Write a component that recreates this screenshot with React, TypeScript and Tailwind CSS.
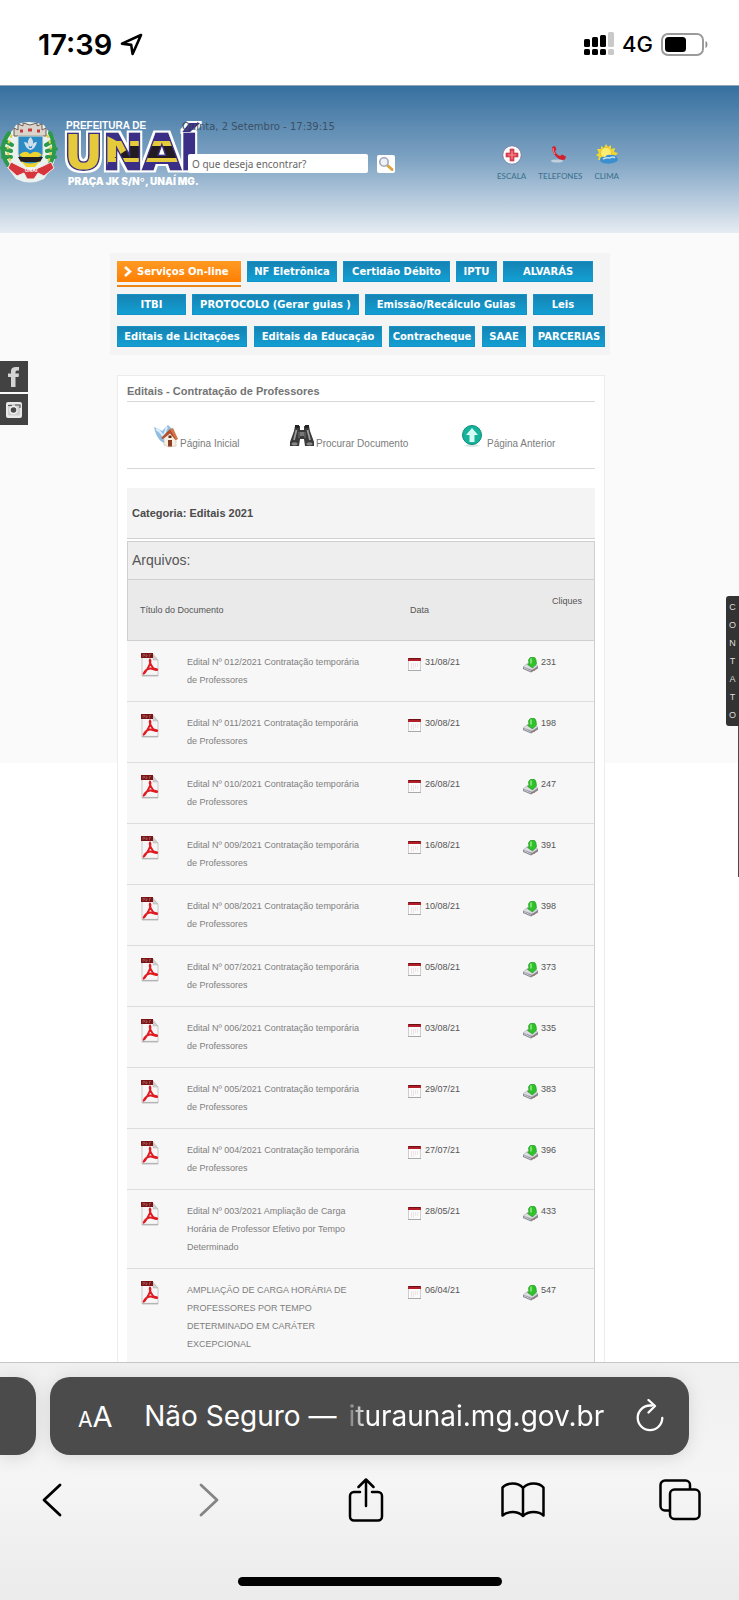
import React from "react";

type Doc = { title: string; date: string; clicks: number };

const professores = (n: string) => `Edital Nº ${n}/2021 Contratação temporária de Professores`;

const docs: Doc[] = [
  { title: professores("012"), date: "31/08/21", clicks: 231 },
  { title: professores("011"), date: "30/08/21", clicks: 198 },
  { title: professores("010"), date: "26/08/21", clicks: 247 },
  { title: professores("009"), date: "16/08/21", clicks: 391 },
  { title: professores("008"), date: "10/08/21", clicks: 398 },
  { title: professores("007"), date: "05/08/21", clicks: 373 },
  { title: professores("006"), date: "03/08/21", clicks: 335 },
  { title: professores("005"), date: "29/07/21", clicks: 383 },
  { title: professores("004"), date: "27/07/21", clicks: 396 },
  { title: "Edital Nº 003/2021 Ampliação de Carga Horária de Professor Efetivo por Tempo Determinado", date: "28/05/21", clicks: 433 },
  { title: "AMPLIAÇÃO DE CARGA HORÁRIA DE PROFESSORES POR TEMPO DETERMINADO EM CARÁTER EXCEPCIONAL", date: "06/04/21", clicks: 547 },
];

function StatusBar() {
  return (
    <div className="flex h-[85px] shrink-0 items-center justify-between bg-white pr-[30px] pl-[38px] pt-[3px] font-['Inter',sans-serif] text-black">
      <div className="flex items-center gap-2">
        <span className="text-[29px] leading-none font-semibold">17:39</span>
        <svg width="23" height="23" viewBox="0 0 23 23" fill="none" stroke="#000" strokeWidth="2.6" strokeLinejoin="round">
          <path d="M21 2 2 10.6l9.2 1.3L12.6 21z" />
        </svg>
      </div>
      <div className="flex items-center gap-2">
        <svg width="30" height="24" viewBox="0 0 30 24">
          <g fill="#000">
            <rect x="0" y="7" width="6" height="8" rx="1.5" />
            <rect x="8" y="5" width="6" height="10" rx="1.5" />
            <rect x="16" y="3" width="6" height="12" rx="1.5" />
            <rect x="0" y="17" width="6" height="6" rx="1.5" />
            <rect x="8" y="17" width="6" height="6" rx="1.5" />
            <rect x="16" y="17" width="6" height="6" rx="1.5" />
          </g>
          <g fill="#c9c9c9">
            <rect x="24" y="0" width="6" height="15" rx="1.5" />
            <rect x="24" y="17" width="6" height="6" rx="1.5" />
          </g>
        </svg>
        <span className="text-[22px] leading-none font-medium">4G</span>
        <svg width="48" height="23" viewBox="0 0 48 23">
          <rect x="1" y="1" width="41" height="21" rx="6" fill="none" stroke="#9b9b9b" strokeWidth="2" />
          <rect x="4" y="4" width="21" height="15" rx="3.5" fill="#000" />
          <path d="M44.5 8c2.6.6 2.6 6.4 0 7z" fill="#8d8d8d" />
        </svg>
      </div>
    </div>
  );
}

function CityLogo() {
  return (
    <svg width="204" height="72" viewBox="0 0 204 72" role="img" aria-label="Prefeitura de Unaí" className="shrink-0">
      <defs>
        <filter id="outline" filterUnits="userSpaceOnUse" x="58" y="0" width="146" height="72">
          <feMorphology in="SourceAlpha" operator="dilate" radius="2" result="wide" />
          <feFlood floodColor="#fff" />
          <feComposite in2="wide" operator="in" />
          <feMerge>
            <feMergeNode />
            <feMergeNode in="SourceGraphic" />
          </feMerge>
        </filter>
        <pattern id="flag" patternUnits="userSpaceOnUse" width="204" height="72">
          <rect width="204" height="72" fill="#3b2f86" />
          <rect x="104" y="22" width="76" height="21" fill="#e5cb3a" />
          <rect x="104" y="27" width="76" height="12" fill="#211f22" />
          <path d="M60 10H105V16L113 20 120 24 128 30 119 36 108 43 105 54H60z" fill="#e5cb3a" />
          <rect x="181" y="0" width="23" height="72" fill="#3b2f86" />
        </pattern>
      </defs>
      {/* coat of arms */}
      <g>
        <path d="M12 12 16 6q12-6 28 0l4 6 6 6q5 16-2 30l-8 12q-14 7-28 0L7 48Q-2 30 6 18z" fill="#eaf2ee" />
        <path d="M9 14Q-3 30 8 46M5 22l7 4M2 29l9 3M3 38l8 0M50 14q9 18-1 32M53 22l-7 4M56 30l-9 2M55 38l-8 0" fill="none" stroke="#2c9a4c" strokeWidth="4" strokeLinecap="round" />
        <path d="M12 16q-8 14-1 27M47 16q7 14 1 27" fill="none" stroke="#e3cf37" strokeWidth="2" strokeDasharray="3 3" />
        <path d="M14 17V9l4 2V5l5 2V4l7 2 7-2v3l5-2v6l4-2v8z" fill="#d9d4cc" stroke="#6d5d57" strokeWidth="1" />
        <path d="M20 12h3M28 11h4M37 12h3" stroke="#c43a3a" strokeWidth="3" />
        <path d="M18 17H43V35q0 9-12.500 12Q18 44 18 35z" fill="#2c8bc4" stroke="#e7e1cf" strokeWidth="1" />
        <path d="M30.500 18c4 4 3 8 0 10-3-2-4-6 0-10zM24 23c4 0 5 3 5 6h3c0-3 1-6 5-6-1 4-3 7-6.500 8C27 30 25 27 24 23z" fill="#cfe0ec" />
        <path d="M19 36q6-6 11-1 6-5 12 1l-5 3H24z" fill="#f0d22f" />
        <path d="M18 38h25l-3 5H21z" fill="#231f20" />
        <path d="M21 42q9 5 19 0l-5 6h-9z" fill="#f0d22f" />
        <path d="M11 43 19 47Q30 54 43 47L51 43 54 49 44 57 38 54 34 60H27L24 54 17 57 8 49z" fill="#d5353b" stroke="#f4e7e7" strokeWidth="1" />
        <text x="31" y="53" textAnchor="middle" fontSize="5" fontWeight="700" fill="#fff" fontFamily="Inter, sans-serif">UNAÍ</text>
      </g>
      <text x="66" y="10" fontSize="10" fontWeight="700" fill="#fff" fontFamily="'Liberation Sans', sans-serif">PREFEITURA DE</text>
      <text
        x="64"
        y="50"
        fontFamily="'DejaVu Sans', sans-serif"
        fontSize="48"
        fontWeight="700"
        fill="url(#flag)"
        stroke="#3b2f86"
        strokeWidth="3"
        paintOrder="stroke"
        filter="url(#outline)"
      >
        UNAÍ
      </text>
      <text x="68" y="66" fontSize="10" fontWeight="900" fill="#fff" fontFamily="Inter, sans-serif">PRAÇA JK S/Nº, UNAÍ MG.</text>
    </svg>
  );
}

function Shortcut({ label, children }: { label: string; children: React.ReactNode }) {
  return (
    <a href="#" className="flex flex-col items-center gap-1 font-['Lato',sans-serif] text-[8px] leading-3 font-medium text-[#41738f]">
      <svg width="22" height="22" viewBox="0 0 22 22">{children}</svg>
      {label}
    </a>
  );
}

function Header() {
  return (
    <header className="flex h-[148px] items-start border-t border-[#8fa5b6] bg-linear-to-b from-[#35709f] via-[#7ea3c3] to-[#e6ecf2] pt-[33px]">
      <CityLogo />
      <div className="relative -ml-[22px] w-[216px] pt-[2px]">
        <p className="font-['DejaVu_Sans',sans-serif] text-[10px] leading-3 text-[#3d5064]">Quinta, 2 Setembro - 17:39:15</p>
        <form className="mt-[21px] ml-[6px] flex items-center gap-[9px]" onSubmit={(e) => e.preventDefault()}>
          <input
            type="search"
            aria-label="Pesquisar"
            placeholder="O que deseja encontrar?"
            className="h-[19px] w-[180px] rounded-[2px] bg-white px-1 font-['Noto_Sans',sans-serif] text-[10px] text-[#555] placeholder:text-[#666] placeholder:opacity-100"
          />
          <button type="submit" aria-label="Buscar" className="flex size-[18px] items-center justify-center rounded-[2px] bg-white">
            <svg width="16" height="16" viewBox="0 0 16 16" fill="none">
              <path d="m9 9 5 4.500" stroke="#dca23c" strokeWidth="3" strokeLinecap="round" />
              <circle cx="6" cy="6" r="4.200" fill="#eef2f8" stroke="#a3a7b8" strokeWidth="1.600" />
            </svg>
          </button>
        </form>
      </div>
      <nav aria-label="Atalhos" className="ml-[99px] flex gap-3 pt-[25px]">
        <Shortcut label="ESCALA">
          <circle cx="11" cy="11" r="9.300" fill="#fbfbfd" stroke="#7c7fa4" strokeWidth="1" />
          <path d="M9 5h4v4h4v4h-4v4H9v-4H5V9h4z" fill="#e3404f" stroke="#b73d4d" strokeWidth=".6" />
          <path d="M11 7v8M7 11h8" stroke="#f3949a" strokeWidth="1" />
        </Shortcut>
        <Shortcut label="TELEFONES">
          <ellipse cx="8" cy="17" rx="6" ry="1.600" fill="#c3d0db" />
          <path d="M3 3 6 2l1.500 3.500L6 7q1.500 4 5 5l2-1.500 4 2-1 3q-5 1.500-9-3Q3 8.500 3 3z" fill="#d3202e" />
          <path d="M4 4q0 4 2 6" stroke="#f38d90" strokeWidth="1" fill="none" />
        </Shortcut>
        <Shortcut label="CLIMA">
          <path d="m10 0 2 3 3-2v4l4-1-1 4 4 1-3 3 2 4H2l1-3-3-2 3-2-2-4 4 0V2l3 2z" fill="#f4d72c" />
          <circle cx="10" cy="9" r="5.500" fill="#fbec74" stroke="#e5bb20" strokeWidth=".7" />
          <path d="M4 16q0-4 5-3 2-3 6-2 2-1 5 1 4 4 0 6-6 3-13 1-3-1-3-3z" fill="#3b8fd0" />
          <path d="M7 15q4-2 7-1 3-2 5 0" stroke="#bfe2f5" strokeWidth="1.500" fill="none" />
        </Shortcut>
      </nav>
    </header>
  );
}

function Tile({ label, className }: { label: string; className: string }) {
  return (
    <a
      href="#"
      className={`flex h-[21px] items-center justify-center border border-[#1494c6] bg-linear-to-b from-[#1583b3] to-[#129fd3] text-[10px] leading-none font-bold whitespace-nowrap text-white ${className}`}
    >
      {label}
    </a>
  );
}

function ServiceNav() {
  return (
    <nav aria-label="Serviços" className="flex h-[102px] flex-col bg-[#f4f4f4] pt-2 pl-[7px] font-['DejaVu_Sans',Verdana,sans-serif]">
      <div className="flex h-[33px] gap-[6px]">
        <a href="#" className="flex h-[26px] w-[124px] flex-col border-b-2 border-[#ee8613]">
          <span className="flex h-[21px] items-center gap-1 bg-linear-to-b from-[#ff9a22] to-[#ff7f00] pl-[6px] text-[10px] leading-none font-bold whitespace-nowrap text-white">
            <svg width="10" height="11" viewBox="0 0 10 11" fill="none" stroke="#fff" strokeWidth="2.600">
              <path d="m2 1 5 4.500L2 10" />
            </svg>
            Serviços On-line
          </span>
        </a>
        <Tile label="NF Eletrônica" className="w-[90px]" />
        <Tile label="Certidão Débito" className="w-[107px]" />
        <Tile label="IPTU" className="w-[41px]" />
        <Tile label="ALVARÁS" className="w-[90px]" />
      </div>
      <div className="flex h-8 gap-[6px]">
        <Tile label="ITBI" className="w-[69px]" />
        <Tile label="PROTOCOLO (Gerar guias )" className="w-[167px]" />
        <Tile label="Emissão/Recálculo Guias" className="w-[162px]" />
        <Tile label="Leis" className="w-[60px]" />
      </div>
      <div className="flex gap-[7px]">
        <Tile label="Editais de Licitações" className="w-[130px]" />
        <Tile label="Editais da Educação" className="w-[128px]" />
        <Tile label="Contracheque" className="w-[86px]" />
        <Tile label="SAAE" className="w-[44px]" />
        <Tile label="PARCERIAS" className="w-[72px]" />
      </div>
    </nav>
  );
}

function PdfIcon() {
  return (
    <svg width="18" height="24" viewBox="0 0 18 24" className="block">
      <path d="M1 3h12l4 4v16H1z" fill="#f6f6f6" stroke="#c9c9c9" strokeWidth="1" />
      <path d="M12 1v6h5z" fill="#cfcfcf" stroke="#b5b5b5" strokeWidth=".5" />
      <path d="M1 22.500h16" stroke="#b4b4b4" strokeWidth="1.200" />
      <rect x="0" y="0" width="12" height="5" fill="#7c1416" />
      <path d="M2 4V1.500h1.500V3M5 4V1.500l1.500 1.200L5 4M8.500 4V1.500H10" stroke="#b98080" strokeWidth=".5" fill="none" />
      <path d="M9 6.500c-1.500 2 1.500 6 3 8.500 1.500 1.500 5 .5 4 2-1.500 1-4.500-1.800-7-1.500S3.500 18 3 20c-1 1 0 1 1-.5C6.500 16 9.500 11 9.500 8z" fill="none" stroke="#e01b22" strokeWidth="1.900" strokeLinejoin="round" />
    </svg>
  );
}

function CalendarIcon() {
  return (
    <svg width="13" height="15" viewBox="0 0 13 15" className="shrink-0">
      <rect x=".5" y="1.500" width="12" height="12" fill="#fbfafa" stroke="#cfcfcf" />
      <rect x="0" y="1" width="13" height="3" fill="#b31f28" />
      <path d="M1 1.500h11" stroke="#6a1016" strokeWidth="1" />
      <path d="M3 7h7M3 9h7M3 11h4" stroke="#e0cfcf" strokeWidth="1" strokeDasharray="1 1" />
      <path d="M0 13.500h13" stroke="#a9a9a9" strokeWidth="1" />
    </svg>
  );
}

function DownloadIcon() {
  return (
    <svg width="16" height="16" viewBox="0 0 16 16" className="shrink-0">
      <path d="M0 10 5 6l10 3-5 4z" fill="#dcdce2" stroke="#a9a9b5" strokeWidth=".6" />
      <path d="M0 10v2l8 3.500 7-4V9l-6 4z" fill="#85858f" />
      <path d="m1 11 7 3" stroke="#c8c8d2" strokeWidth="1" />
      <path d="M5.500 3q1-3 4-3 3 0 3.500 3l.5 4-4 4-5-3.500 1.500-1z" fill="#2fc22b" stroke="#1e8e20" strokeWidth=".6" />
      <path d="M8 1.500v5" stroke="#8cea7c" strokeWidth="1.600" />
      <circle cx="11" cy="13.300" r=".8" fill="#d0633a" />
    </svg>
  );
}

function HouseIcon() {
  return (
    <svg width="24" height="24" viewBox="0 0 24 24" className="shrink-0">
      <path d="M0 3q5 2 8 4l6-6 4 4-5 15Q3 18 0 3z" fill="#8fbde4" />
      <path d="M2 5q6 3 8 10M13 3l-3 8" stroke="#dceefa" strokeWidth="2" fill="none" />
      <path d="M10 14 16 9l6 5v8l-7 1-5-2z" fill="#f5efe4" stroke="#c9bba8" strokeWidth=".6" />
      <path d="m7 14 9-9 7 10-1.500 1L16 9.500 9 15z" fill="#b4502b" />
      <path d="m16 5 3-1 5 11-2 1z" fill="#d27748" />
      <path d="M14 16h4v6.500h-4z" fill="#8c3f25" />
      <path d="M14.500 11.500h3v2.500h-3z" fill="#6d2a1b" />
    </svg>
  );
}

function BinocularsIcon() {
  return (
    <svg width="24" height="24" viewBox="0 0 24 24" className="shrink-0">
      <path d="M5 2h5v4h4V2h5l1 5 4 11v4h-9l-1-7h-4l-1 7H0v-4L4 7z" fill="#3a3a3a" />
      <path d="M5 1h4v3H5zM15 1h4v3h-4z" fill="#222" />
      <path d="M6.500 6 4 16M17.500 6 20 16" stroke="#9c9c9c" strokeWidth="1.800" />
      <path d="M9 8v6M15 8v6" stroke="#6e6e6e" strokeWidth="1.200" />
      <path d="M10 8h4v4h-4z" fill="#777" />
      <ellipse cx="4.500" cy="19.800" rx="3" ry="1.600" fill="#878787" />
      <ellipse cx="19.500" cy="19.800" rx="3" ry="1.600" fill="#878787" />
    </svg>
  );
}

function UpIcon() {
  return (
    <svg width="22" height="24" viewBox="0 0 22 24" className="shrink-0">
      <ellipse cx="11" cy="21.500" rx="7" ry="1.500" fill="#d9e5e3" />
      <circle cx="11" cy="11" r="9.500" fill="#16b39c" stroke="#0b8a79" strokeWidth="1" />
      <path d="m11 4 6 7h-3.500v7h-5v-7H5z" fill="#d4fbf4" />
    </svg>
  );
}

function Documents() {
  const link = "flex items-start text-[10px] text-[#7c7c7c]";
  return (
    <section className="mt-[20px] mr-[5px] ml-[7px] border border-[#ececec] bg-white px-[9px] pb-6 font-['Liberation_Sans',Arial,sans-serif]">
      <h1 className="border-b border-[#d8d8d8] pt-2 pb-[2px] text-[11px] leading-[15px] font-bold text-[#747474]">
        Editais - Contratação de Professores
      </h1>
      <div className="flex h-[67px] border-b border-[#d8d8d8] pt-[22px]">
        <a href="#" className={`${link} w-[136px] gap-[2px] pl-[27px]`}>
          <HouseIcon />
          <span className="pt-3">Página Inicial</span>
        </a>
        <a href="#" className={`${link} w-[170px] gap-[2px] pl-[27px]`}>
          <BinocularsIcon />
          <span className="pt-3">Procurar Documento</span>
        </a>
        <a href="#" className={`${link} gap-[4px] pl-[28px]`}>
          <UpIcon />
          <span className="pt-3">Página Anterior</span>
        </a>
      </div>
      <h2 className="mt-[19px] mb-[2px] flex h-[51px] items-center border-b border-[#cfcfcf] bg-[#f4f4f4] px-[5px] text-[11px] font-bold text-[#4b4b4b]">
        Categoria: Editais 2021
      </h2>
      <table className="w-full table-fixed border-separate border-spacing-0 border-r border-[#cfcfcf] text-[9px] leading-[18px] text-[#555]">
        <colgroup>
          <col className="w-[60px]" />
          <col className="w-[221px]" />
          <col className="w-[115px]" />
          <col />
        </colgroup>
        <thead>
          <tr>
            <th colSpan={4} className="h-[39px] border-y border-l border-[#cfcfcf] bg-[#eee] px-1 pb-[2px] text-left text-[14px] font-normal">
              Arquivos:
            </th>
          </tr>
          <tr className="bg-[#eaeaea]">
            <th colSpan={2} className="h-[61px] border-b border-l border-[#cfcfcf] pl-3 text-left font-normal">
              Título do Documento
            </th>
            <th className="border-b border-[#cfcfcf] pl-[2px] text-left font-normal">Data</th>
            <th className="border-b border-[#cfcfcf] pt-3 pr-3 text-right align-top font-normal">Cliques</th>
          </tr>
        </thead>
        <tbody>
          {docs.map((d) => (
            <tr key={d.date} className="bg-[#f7f7f7] align-top">
              <td className="border-b border-[#dcdcdc] pt-3 pl-[14px]">
                <PdfIcon />
              </td>
              <td className="border-b border-[#dcdcdc] py-3 pr-[38px]">
                <a href="#" className="block text-[#7e7e7e]">{d.title}</a>
              </td>
              <td className="border-b border-[#dcdcdc] pt-3">
                <span className="flex items-start gap-1">
                  <span className="pt-1"><CalendarIcon /></span>
                  {d.date}
                </span>
              </td>
              <td className="border-b border-[#dcdcdc] pt-3">
                <span className="flex items-start gap-[2px]">
                  <span className="pt-1"><DownloadIcon /></span>
                  {d.clicks}
                </span>
              </td>
            </tr>
          ))}
        </tbody>
      </table>
    </section>
  );
}

function SideWidgets() {
  return (
    <>
      <div className="absolute top-[276px] left-0 flex flex-col gap-[2px]">
        <a href="#" aria-label="Facebook" className="flex h-[31px] w-7 items-center justify-center bg-[#424242]">
          <svg width="12" height="20" viewBox="0 0 12 20" fill="#d4d4d4">
            <path d="M3 20V10H0V6.500h3V4q0-4 5-4h3v3.500H9Q7.500 3.500 7.500 5v1.500H11L10.500 10h-3v10z" />
          </svg>
        </a>
        <a href="#" aria-label="Instagram" className="flex h-[31px] w-7 items-center justify-center bg-[#424242]">
          <svg width="16" height="16" viewBox="0 0 16 16">
            <rect width="16" height="16" rx="2" fill="#e9e9e9" />
            <rect x="2" y="2" width="12" height="11.500" rx="1" fill="#cfcfcf" />
            <circle cx="7.500" cy="8" r="4.200" fill="#f2f2f2" />
            <circle cx="7.500" cy="8" r="2.800" fill="#4a4a4a" />
            <path d="M2 3.500h4M9 3h5v3" stroke="#555" strokeWidth="1.200" fill="none" />
          </svg>
        </a>
      </div>
      <div className="absolute top-[511px] right-0 h-[281px] border-r border-[#4a4a4a]">
        <a href="#" aria-label="Contato" className="-mr-px flex w-[13px] flex-col items-center rounded-l-[3px] bg-[#333] py-[2px] font-['Liberation_Sans',Arial,sans-serif] text-[9px] leading-[18px] text-[#ddd]">
          {["C", "O", "N", "T", "A", "T", "O"].map((c, i) => (
            <span key={i}>{c}</span>
          ))}
        </a>
      </div>
    </>
  );
}

function BrowserBar() {
  const btn = "flex size-11 items-center justify-center";
  return (
    <footer className="relative h-[238px] shrink-0 border-t border-[#c6c6c6] bg-linear-to-b from-[#f0f0f0] via-[#f5f5f5] to-[#ebebeb] pt-[14px] text-black">
      <div className="flex h-[78px] gap-[14px] pr-[50px] font-['Inter',sans-serif] text-white">
        <div className="w-9 rounded-r-[20px] bg-[#4b4b4b] shadow-[0_2px_18px_rgba(0,0,0,0.12)]" />
        <div className="flex flex-1 items-center justify-between rounded-[20px] bg-[#4b4b4b] pr-[25px] pl-7 shadow-[0_2px_18px_rgba(0,0,0,0.12)]">
          <button aria-label="Opções de leitura" className="flex items-baseline leading-none">
            <span className="text-[21px]">A</span>
            <span className="text-[29px]">A</span>
          </button>
          <div className="flex items-center gap-3 text-[28px] leading-10 whitespace-nowrap">
            <span>Não Seguro —</span>
            <span className="[mask-image:linear-gradient(to_right,rgba(0,0,0,0.25),black_20px)]">ituraunai.mg.gov.br</span>
          </div>
          <button aria-label="Recarregar">
            <svg width="28" height="34" viewBox="0 0 28 34" fill="none" stroke="#fff" strokeWidth="2.300" strokeLinecap="round" strokeLinejoin="round">
              <path d="M16 6.500H14A12.300 12.300 0 1 0 26.300 18.800" />
              <path d="m12.500 1 6.500 6-6.500 6.500" />
            </svg>
          </button>
        </div>
      </div>
      <div className="mt-[23px] flex justify-between pr-[37px] pl-[30px]">
        <button aria-label="Voltar" className={btn}>
          <svg width="20" height="34" viewBox="0 0 20 34" fill="none" stroke="#000" strokeWidth="2.800" strokeLinecap="round" strokeLinejoin="round">
            <path d="M18 2 2 17l16 15" />
          </svg>
        </button>
        <button aria-label="Avançar" className={btn}>
          <svg width="20" height="34" viewBox="0 0 20 34" fill="none" stroke="#858585" strokeWidth="2.800" strokeLinecap="round" strokeLinejoin="round">
            <path d="m2 2 16 15L2 32" />
          </svg>
        </button>
        <button aria-label="Compartilhar" className={btn}>
          <svg width="36" height="44" viewBox="0 0 36 44" fill="none" stroke="#000" strokeWidth="2.500" strokeLinecap="round" strokeLinejoin="round">
            <path d="M12 14H6a4 4 0 0 0-4 4v20.500a4 4 0 0 0 4 4h24a4 4 0 0 0 4-4V18a4 4 0 0 0-4-4h-6" />
            <path d="M18 28V2M10.500 9 18 1.500 25.500 9" />
          </svg>
        </button>
        <button aria-label="Favoritos" className={btn}>
          <svg width="44" height="36" viewBox="0 0 44 36" fill="none" stroke="#000" strokeWidth="2.500" strokeLinejoin="round" strokeLinecap="round">
            <path d="M22 34V6Q18.500 1.500 11.500 1.500T1.500 5.500V33.500Q5 30 11.500 30T22 34Q26 30 32.500 30T42.500 33.500V5.500Q39 1.500 32.500 1.500T22 6" />
          </svg>
        </button>
        <button aria-label="Abas" className={btn}>
          <svg width="42" height="42" viewBox="0 0 42 42" fill="none" stroke="#000" strokeWidth="2.500" strokeLinejoin="round">
            <path d="M11 31.500H6a4.500 4.500 0 0 1-4.500-4.500V6A4.500 4.500 0 0 1 6 1.500h20.500A4.500 4.500 0 0 1 31 6v4.500" />
            <rect x="11" y="10.500" width="29.500" height="29.500" rx="4.500" />
          </svg>
        </button>
      </div>
      <div className="mx-auto mt-[55px] h-[9px] w-[264px] rounded-full bg-black" />
    </footer>
  );
}

export default function App() {
  return (
    <div className="flex h-screen flex-col overflow-hidden bg-white">
      <StatusBar />
      <main className="relative min-h-0 flex-1 overflow-y-auto bg-[linear-gradient(#fafafa_678px,#fff_678px)] [scrollbar-width:none]">
        <Header />
        <div className="pt-[20px] pr-[19px]">
          <div className="mx-auto w-[500px]">
            <ServiceNav />
            <Documents />
          </div>
        </div>
        <SideWidgets />
      </main>
      <BrowserBar />
    </div>
  );
}
